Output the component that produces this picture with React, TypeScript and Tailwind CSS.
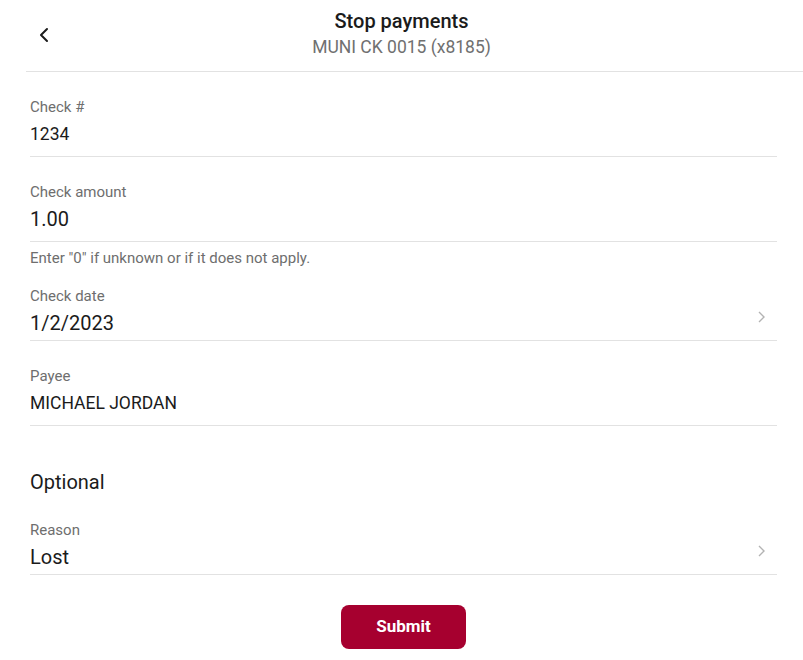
import { ChevronLeft } from 'lucide-react'

type FieldProps = {
  label: string
  value: string
  big?: boolean
  picker?: boolean
}

const Field = ({ label, value, big, picker }: FieldProps) => (
  <div className={`flex items-end border-b border-[#e2e2e2] ${picker ? 'pb-[4px]' : 'pb-[9px]'}`}>
    <div className="flex-1 min-w-0">
      <div className="text-[15px] leading-[20px] text-[#6e6e6e]">{label}</div>
      <div
        className={`mt-[4px] leading-[26px] text-[#1b1b1b] ${big ? 'text-[20px]' : 'text-[17.5px]'}`}
      >
        {value}
      </div>
    </div>
    {picker && (
      <svg width="9" height="12" viewBox="0 0 9 12" className="mb-[13px] mr-[11px]">
        <polyline points="2,1 7,6 2,11" fill="none" stroke="#b3b3b3" strokeWidth="1.4" />
      </svg>
    )}
  </div>
)

export default function App() {
  return (
    <div className="bg-white w-[803px] h-[660px] overflow-hidden font-['Roboto',sans-serif]">
      <header className="pt-[8px] grid grid-cols-[1fr_auto_1fr] items-center">
        <button className="justify-self-start ml-[32px] mt-[4px] text-[#1b1b1b]">
          <ChevronLeft size={24} strokeWidth={2} />
        </button>
        <div className="text-center">
          <h1 className="text-[20px] leading-[26px] font-medium text-[#1b1b1b]">Stop payments</h1>
          <p className="mt-[2px] text-[17.5px] leading-[22px] text-[#707070]">MUNI CK 0015 (x8185)</p>
        </div>
        <div />
      </header>
      <div className="ml-[26px] mt-[13px] border-b border-[#e2e2e2]" />

      <div className="ml-[30px] mr-[26px]">
        <div className="pt-[25px]">
          <Field label="Check #" value="1234" />
        </div>
        <div className="pt-[25px]">
          <Field label="Check amount" value="1.00" big />
        </div>
        <p className="mt-[6px] text-[15px] leading-[20px] text-[#6e6e6e]">
          Enter "0" if unknown or if it does not apply.
        </p>
        <div className="pt-[18px]">
          <Field label="Check date" value="1/2/2023" big picker />
        </div>
        <div className="pt-[25px]">
          <Field label="Payee" value="MICHAEL JORDAN" />
        </div>

        <h2 className="mt-[42px] text-[20px] leading-[28px] text-[#1b1b1b]">Optional</h2>
        <div className="pt-[24px]">
          <Field label="Reason" value="Lost" big picker />
        </div>

        <div className="flex justify-center mt-[30px]">
          <button className="w-[125px] h-[44px] rounded-[8px] bg-[#a6002f] text-white text-[17px] font-bold">
            Submit
          </button>
        </div>
      </div>
    </div>
  )
}
